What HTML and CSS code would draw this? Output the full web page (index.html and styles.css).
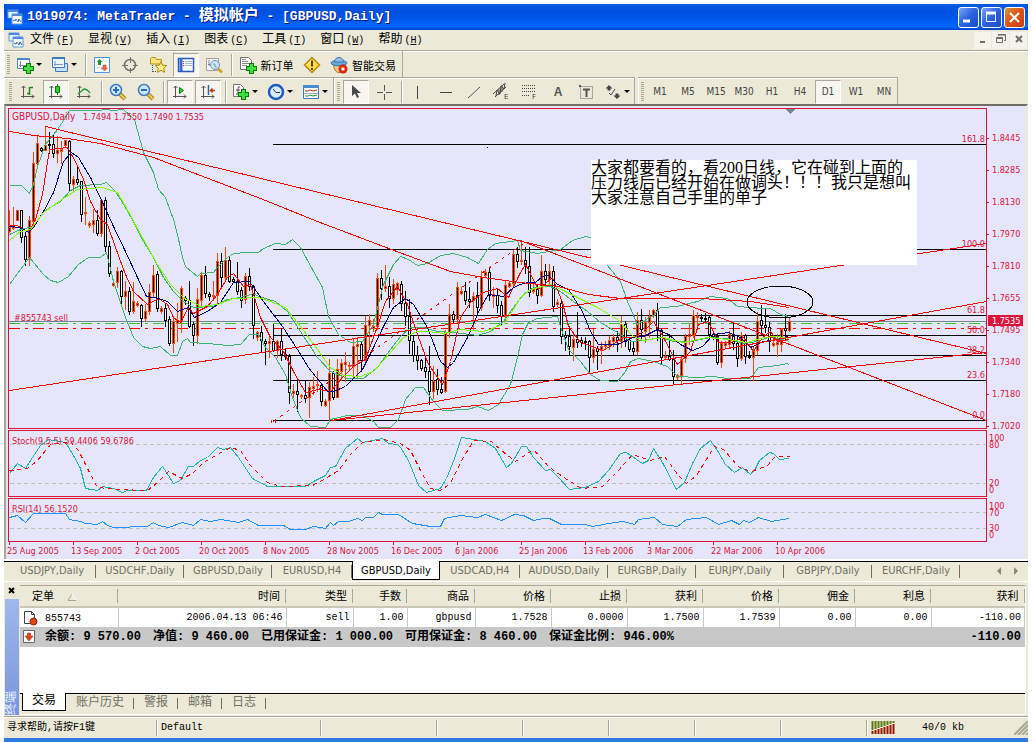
FILE: index.html
```html
<!DOCTYPE html>
<html lang="zh-CN">
<head>
    <meta charset="UTF-8">
    <meta name="viewport" content="width=device-width, initial-scale=1.0">
    <title>1019074: MetaTrader - 模拟帐户 - [GBPUSD,Daily]</title>
    <link rel="stylesheet" href="styles.css">
</head>
<body>
    <header class="titlebar">
        <svg class="app-icon" width="16" height="16" viewBox="0 0 16 16"><path d="M1 1h10v8H1z" fill="#e8f4ff" stroke="#5a9ae0"/><path d="M5 5h10v10H5z" fill="#fff" stroke="#5a9ae0"/><path d="M1 2h10M5 6h10" stroke="#4a8ae0" stroke-width="2"/><path d="M6 11l2 1 1-2 2 3 1-3 2 3" fill="none" stroke="#3a6ab0"/></svg>
        <h1>1019074: MetaTrader - <span class="cn">模拟帐户</span> - [GBPUSD,Daily]</h1>
        <div class="win-buttons">
            <button class="win" aria-label="Minimize"><svg width="18" height="18"><path d="M4 13h7" stroke="#fff" stroke-width="3"/></svg></button>
            <button class="win" aria-label="Maximize"><svg width="18" height="18"><path d="M4.500 5v8.500h9V5" fill="none" stroke="#fff"/><path d="M4 5h10" stroke="#fff" stroke-width="3"/></svg></button>
            <button class="win close" aria-label="Close"><svg width="18" height="18"><path d="M5 5l9 9M14 5l-9 9" stroke="#fff" stroke-width="2"/></svg></button>
        </div>
    </header>

    <nav class="menubar">
        <svg class="app-icon" width="16" height="16" viewBox="0 0 16 16"><path d="M1 1h10v8H1z" fill="#e8f4ff" stroke="#5a9ae0"/><path d="M5 5h10v10H5z" fill="#fff" stroke="#5a9ae0"/><path d="M1 2h10M5 6h10" stroke="#4a8ae0" stroke-width="2"/><path d="M6 11l2 1 1-2 2 3 1-3 2 3" fill="none" stroke="#3a6ab0"/></svg>
        <button>文件<span class="key">(<u>F</u>)</span></button>
        <button>显视<span class="key">(<u>V</u>)</span></button>
        <button>插入<span class="key">(<u>I</u>)</span></button>
        <button>图表<span class="key">(<u>C</u>)</span></button>
        <button>工具<span class="key">(<u>T</u>)</span></button>
        <button>窗口<span class="key">(<u>W</u>)</span></button>
        <button>帮助<span class="key">(<u>H</u>)</span></button>
        <div class="mdi-buttons">
            <button aria-label="Minimize chart"><svg width="12" height="12"><path d="M3 9h5" stroke="#716f64" stroke-width="2"/></svg></button>
            <button aria-label="Restore chart"><svg width="12" height="12" fill="none" stroke="#716f64"><path d="M3.500 3V1.500h7v6H9M1.500 4.500h6v5h-6zM1 5.500h7M3 2h8"/></svg></button>
            <button aria-label="Close chart"><svg width="12" height="12"><path d="M3 3l6 6M9 3L3 9" stroke="#716f64" stroke-width="2"/></svg></button>
        </div>
    </nav>

    <div class="toolrow">
        <div class="toolbar first">
            <span class="grip"></span>
            <button class="tool drop" aria-label="New chart"><svg width="18" height="18"><path d="M1.500 2.500h12v10h-12z" fill="#fff" stroke="#4a8ac8"/><path d="M1 3h13" stroke="#4a8ac8" stroke-width="2"/><path d="M4.500 5v6M3 9.500h8" stroke="#7a8a9a"/><path d="M12.500 7v11M7 12.500h11" stroke="#087a08" stroke-width="5"/><path d="M12.500 8v9M8 12.500h9" stroke="#3ce03c" stroke-width="3"/></svg></button>
            <button class="tool drop" aria-label="Profiles"><svg width="18" height="18"><path d="M4.500 7.500h12v8h-12z" fill="#c8e0f8" stroke="#3a7ac0"/><path d="M1.500 1.500h12v10h-12z" fill="#e8f4ff" stroke="#3a7ac0"/><path d="M1 2h13" stroke="#3a7ac0" stroke-width="2"/><path d="M4 5v5M3 8.500h9" stroke="#7a9aba"/></svg></button>
            <span class="sep"></span>
            <button class="tool" aria-label="Market watch"><svg width="18" height="18"><path d="M1.500 1.500h15v15h-15z" fill="#fff" stroke="#4a9ae0"/><path d="M4 12h10M9 5h5" stroke="#c8d8e8"/><path d="M6.500 3l3 3H8v3H5V6H3.500z" fill="#1a9a2a"/><path d="M11.500 15l-3-3H10V9h3v3h1.500z" fill="#e86a4a" stroke="#b83a1a" stroke-width=".5"/></svg></button>
            <button class="tool" aria-label="Data window"><svg width="18" height="18" fill="none" stroke="#707070"><circle cx="9" cy="9" r="5.500" stroke-width="1.500"/><path d="M9.500 1v6M9.500 12v5M1 9.500h6M12 9.500h5" stroke-width="1"/></svg></button>
            <button class="tool" aria-label="Navigator"><svg width="18" height="18"><path d="M1.500 8V2.500l1-1h4l1 2h5V8z" fill="#ffe27a" stroke="#b89418"/><path d="M3.500 9v7M4 15.500h4" stroke="#555" stroke-dasharray="1 1"/><path d="M12 5.500l1.700 3.700 4 .4-3 2.700.9 4-3.600-2-3.500 2 .8-4-3-2.700 4-.4z" fill="#fff08a" stroke="#b08a10"/></svg></button>
            <button class="tool on" aria-label="Terminal"><svg width="18" height="18"><path d="M1.500 2.500h15v13h-15z" fill="#fff" stroke="#2a5ac0" stroke-width="1.500"/><path d="M4 2v13" stroke="#3a6ad0" stroke-width="3"/><path d="M8 5.500h7M8 7.500h7M8 9.500h7" stroke="#aab4c8"/><path d="M6 5.500h1M6 7.500h1M6 9.500h1" stroke="#d03030"/></svg></button>
            <button class="tool" aria-label="Strategy tester"><svg width="18" height="18"><path d="M1.500 2.500h12v12h-12z" fill="#f8f8f8" stroke="#a0a0a0"/><path d="M4 4v6M3 8.500h3" stroke="#888"/><circle cx="10" cy="9" r="4.500" fill="#cfe6fa" stroke="#6a94c0"/><path d="M8 8h2v3h2" stroke="#7a9ab8" fill="none"/><path d="M13 12.500l4 4" stroke="#d8a030" stroke-width="3"/></svg></button>
            <span class="sep"></span>
            <button class="tool text order"><svg width="18" height="18"><path d="M1.500 1.500h8l3 3v9h-11z" fill="#fff" stroke="#707070"/><path d="M3 5.500h6M3 7.500h7M3 9.500h5M3 3.500h4" stroke="#888"/><path d="M12.500 7v11M7 12.500h11" stroke="#087a08" stroke-width="5"/><path d="M12.500 8v9M8 12.500h9" stroke="#3ce03c" stroke-width="3"/></svg>新订单</button>
            <button class="tool" aria-label="MetaEditor"><svg width="18" height="18"><path d="M9 1.500L16.500 9 9 16.500 1.500 9z" fill="#ffd94a" stroke="#b08a10" stroke-width="1.500"/><path d="M9 4.500v6M9 12v2" stroke="#5a4a08" stroke-width="2"/><path d="M4 9l4-4" stroke="#fff" stroke-opacity=".8"/></svg></button>
            <button class="tool text"><svg width="18" height="18"><path d="M3.500 8h11c0 5-2 8.500-5.500 8.500S4 13 3.500 8z" fill="#f0c878" stroke="#a8782a"/><ellipse cx="9" cy="7" rx="8" ry="2.800" fill="#6aa6dc" stroke="#3a76ac"/><path d="M4.500 6C4.500 0 13.500 0 13.500 6z" fill="#8cc0ea" stroke="#3a76ac"/><circle cx="13" cy="13" r="4.500" fill="#d8260c"/><path d="M11.500 11.500h3v3h-3z" fill="#fff"/></svg>智能交易</button>
        </div>
    </div>

    <div class="toolrow">
        <div class="toolbar charts">
            <span class="grip"></span>
            <button class="tool" aria-label="Bar chart"><svg width="18" height="18" fill="none" stroke="#555"><path d="M4.500 15V3M2.500 5l2-2 2 2M2 13.500h13M13 11.500l2 2-2 2"/><path d="M10.500 4v8M8 10.500h2M11 4.500h3" stroke="#1a8a1a" stroke-width="1.500"/></svg></button>
            <button class="tool on" aria-label="Candlesticks"><svg width="18" height="18" fill="none" stroke="#555"><path d="M4.500 15V3M2.500 5l2-2 2 2M2 13.500h13M13 11.500l2 2-2 2"/><path d="M10.500 1v11" stroke="#1a8a1a"/><path d="M8.500 3.500h4v6h-4z" fill="#30d030" stroke="#0a7a0a"/></svg></button>
            <button class="tool" aria-label="Line chart"><svg width="18" height="18" fill="none" stroke="#555"><path d="M4.500 15V3M2.500 5l2-2 2 2M2 13.500h13M13 11.500l2 2-2 2"/><path d="M3 11l6-5q3 0 6 4" stroke="#2a9a3a" stroke-width="1.500"/></svg></button>
            <span class="sep"></span>
            <button class="tool" aria-label="Zoom in"><svg width="18" height="18"><path d="M11 11l5 5" stroke="#a87a18" stroke-width="4"/><path d="M11 11l5 5" stroke="#f0cc58" stroke-width="2"/><circle cx="7" cy="7" r="5.500" fill="#d0e8ff" stroke="#3a7ac8" stroke-width="1.500"/><path d="M4 7h6M7 4v6" stroke="#2a6ac0" stroke-width="2"/></svg></button>
            <button class="tool" aria-label="Zoom out"><svg width="18" height="18"><path d="M11 11l5 5" stroke="#a87a18" stroke-width="4"/><path d="M11 11l5 5" stroke="#f0cc58" stroke-width="2"/><circle cx="7" cy="7" r="5.500" fill="#d0e8ff" stroke="#3a7ac8" stroke-width="1.500"/><path d="M4 7h6" stroke="#2a6ac0" stroke-width="2"/></svg></button>
            <span class="sep"></span>
            <button class="tool on" aria-label="Auto scroll"><svg width="18" height="18" fill="none" stroke="#555"><path d="M4.500 15V3M2.500 5l2-2 2 2M2 13.500h13M13 11.500l2 2-2 2"/><path d="M8.500 4.500v6l4-3z" fill="#30d030" stroke="#0a7a0a"/></svg></button>
            <button class="tool on" aria-label="Chart shift"><svg width="18" height="18" fill="none" stroke="#555"><path d="M4.500 15V3M2.500 5l2-2 2 2M2 13.500h13M13 11.500l2 2-2 2"/><path d="M9.500 2v10" stroke="#2a6aa0" stroke-width="1.500"/><path d="M16 7.500h-5M13.500 5.500l-2 2 2 2" stroke="#b83a10" stroke-width="1.500"/></svg></button>
            <span class="sep"></span>
            <button class="tool drop" aria-label="Indicators"><svg width="18" height="18"><path d="M1.500 1.500h7l3 3v9h-10z" fill="#fff" stroke="#777"/><path d="M8 4q-2-1-2 2v4q0 2-2 1M4 7h4" fill="none" stroke="#555"/><path d="M11.500 6v11M6 11.500h11" stroke="#087a08" stroke-width="5"/><path d="M11.500 7v9M7 11.500h9" stroke="#3ce03c" stroke-width="3"/></svg></button>
            <button class="tool drop" aria-label="Periods"><svg width="18" height="18"><circle cx="9" cy="9" r="7" fill="#d8ecff" stroke="#1c5cc0" stroke-width="2.500"/><path d="M6 6l3 3.500h4" fill="none" stroke="#334"/></svg></button>
            <button class="tool drop" aria-label="Templates"><svg width="18" height="18"><path d="M1.500 2.500h15v13h-15z" fill="#fff" stroke="#3a7ac0"/><path d="M1 3.500h16" stroke="#4a8ad0" stroke-width="3"/><path d="M3 8h3l2-1 3 1 4-1" fill="none" stroke="#b03010"/><path d="M2 10.500h14" stroke="#9ab"/><path d="M3 13h3l2-1 3 1 4-1" fill="none" stroke="#2a8a2a"/></svg></button>
        </div>
        <div class="toolbar lines">
            <span class="grip"></span>
            <button class="tool on" aria-label="Cursor"><svg width="18" height="18"><path d="M5 2v11l3-2.500L10 15l2-1-2-4h4z" fill="#4a4a4a"/></svg></button>
            <button class="tool" aria-label="Crosshair"><svg width="18" height="18"><path d="M9.500 2v6M9.500 11v6M2 9.500h6M11 9.500h6" stroke="#555"/></svg></button>
            <span class="sep"></span>
            <button class="tool" aria-label="Vertical line"><svg width="18" height="18"><path d="M8.500 3v13" stroke="#444"/></svg></button>
            <button class="tool" aria-label="Horizontal line"><svg width="18" height="18"><path d="M3 9.500h12" stroke="#444"/></svg></button>
            <button class="tool" aria-label="Trend line"><svg width="18" height="18"><path d="M3 15L15 4" stroke="#555"/></svg></button>
            <button class="tool" aria-label="Equidistant channel"><svg width="20" height="20"><path d="M1 12L12 2M3 15L14 5M4 14l1-6 3 4 1-8 3 3 1-6M7 13V7M10 10V3" fill="none" stroke="#444"/><text class="tag" x="12" y="17">E</text></svg></button>
            <button class="tool" aria-label="Fibonacci"><svg width="20" height="20"><path d="M2 3.500h13M2 6.500h13M2 9.500h13M2 13.500h8" stroke="#444" stroke-dasharray="1 1"/><text class="tag" x="12" y="17">F</text></svg></button>
            <button class="tool glyph" aria-label="Text">A</button>
            <button class="tool" aria-label="Text label"><svg width="18" height="18"><path d="M3.500 3.500h12v12h-12z" fill="none" stroke="#666" stroke-dasharray="1 1"/><path d="M2 2h2v2H2z" fill="#555"/><path d="M6 6.500h7M9.500 6v8" stroke="#555" stroke-width="2"/></svg></button>
            <button class="tool drop" aria-label="Arrows"><svg width="18" height="18"><path d="M5 2l3.500 3.500H6.500v2h-3v-2H1.500zM13 16l-3.500-3.500h2v-2h3v2h2z" fill="#444"/><path d="M5 10l2 2 4-6" fill="none" stroke="#444"/></svg></button>
        </div>
        <div class="toolbar periods">
            <span class="grip"></span>
            <button class="tool period">M1</button>
            <button class="tool period">M5</button>
            <button class="tool period">M15</button>
            <button class="tool period">M30</button>
            <button class="tool period">H1</button>
            <button class="tool period">H4</button>
            <button class="tool period on">D1</button>
            <button class="tool period">W1</button>
            <button class="tool period">MN</button>
        </div>
    </div>

    <main class="chart-frame">
        <svg id="chart" class="chart" viewBox="6 106 1020 453" role="img" aria-label="GBPUSD Daily"></svg>
    </main>

    <div class="chart-tabs">
        <button>USDJPY,Daily</button>
        <button>USDCHF,Daily</button>
        <button>GBPUSD,Daily</button>
        <button class="short">EURUSD,H4</button>
        <button class="active">GBPUSD,Daily</button>
        <button class="short">USDCAD,H4</button>
        <button>AUDUSD,Daily</button>
        <button>EURGBP,Daily</button>
        <button>EURJPY,Daily</button>
        <button>GBPJPY,Daily</button>
        <button>EURCHF,Daily</button>
        <div class="tab-scroll"><svg width="24" height="8"><path d="M5 0v8L1 4zM18 0v8l4-4z" fill="#8a887a"/></svg></div>
    </div>

    <section class="terminal">
        <div class="side">
            <button aria-label="Close terminal"><svg width="8" height="8"><path d="M1 1l5 5M6 1L1 6" stroke="#000" stroke-width="2"/></svg></button>
            <div class="side-label"><span>终端</span></div>
        </div>
        <div class="pane">
            <table>
                <colgroup>
                    <col class="c-order"><col class="c-time"><col class="c-type"><col class="c-lots"><col class="c-symbol">
                    <col class="c-num"><col class="c-num"><col class="c-num"><col class="c-num"><col class="c-num"><col class="c-num"><col>
                </colgroup>
                <thead>
                    <tr><th class="left">定单<svg class="sort" width="10" height="8"><path d="M1 7.500h8M1 7.500L5 1" fill="none" stroke="#aca899"/><path d="M5 1l4 6" stroke="#fff"/></svg></th><th>时间</th><th>类型</th><th>手数</th><th>商品</th><th>价格</th><th>止损</th><th>获利</th><th>价格</th><th>佣金</th><th>利息</th><th>获利</th></tr>
                </thead>
                <tbody>
                    <tr>
                        <td class="left"><svg class="row-icon" width="15" height="16"><path d="M1.500 1.500h7l3 3v9h-10z" fill="#fff" stroke="#444"/><path d="M8.500 1.500v3h3" fill="none" stroke="#444"/><circle cx="10.500" cy="11.500" r="3.500" fill="#e04818" stroke="#8a2008"/></svg>855743</td>
                        <td>2006.04.13 06:46</td><td>sell</td><td>1.00</td><td>gbpusd</td><td>1.7528</td><td>0.0000</td><td>1.7500</td><td>1.7539</td><td>0.00</td><td>0.00</td><td>-110.00</td>
                    </tr>
                    <tr class="summary">
                        <td colspan="12">
                            <div class="totals">
                                <svg width="13" height="14"><path d="M.500.500h11v12H.500z" fill="#fff" stroke="#666"/><path d="M4.500 3v3H2l4 5 4-5H7.500V3z" fill="#e04818" stroke="#8a2008" stroke-width=".5"/></svg>
                                <span>余额: 9 570.00</span>
                                <span>净值: 9 460.00</span>
                                <span>已用保证金: 1 000.00</span>
                                <span>可用保证金: 8 460.00</span>
                                <span>保证金比例: 946.00%</span>
                                <span class="profit">-110.00</span>
                            </div>
                        </td>
                    </tr>
                </tbody>
            </table>
            <div class="pane-tabs">
                <button class="active">交易</button>
                <button>账户历史</button>
                <button>警报</button>
                <button>邮箱</button>
                <button>日志</button>
            </div>
        </div>
    </section>

    <footer class="statusbar">
        <div class="help">寻求帮助,请按F1键</div>
        <div class="profile">Default</div>
        <div class="blank wide"></div>
        <div class="blank"></div>
        <div class="blank"></div>
        <div class="blank"></div>
        <div class="blank"></div>
        <div class="blank"></div>
        <div class="traffic">
            <svg width="24" height="13"><path d="M1.500 0v9M4.500 0v8M7.500 0v7M10.500 0v6M13.500 0v5M16.500 0v4M19.500 0v3M22.500 0v2" stroke="#5a7a10" stroke-width="2"/><path d="M1.500 10v3M4.500 9v4M7.500 8v5M10.500 7v6M13.500 6v7M16.500 5v8M19.500 4v9M22.500 3v10" stroke="#981800" stroke-width="2"/></svg>
            <span>40/0 kb</span>
            <svg class="resize" width="14" height="14"><path d="M0 14L14 0M4 14L14 4M8 14l6-6M12 14l2-2" stroke="#aca899" stroke-width="2"/></svg>
        </div>
    </footer>

    <script src="chart.js"></script>
</body>
</html>
```
FILE: styles.css
```css
* {
    box-sizing: border-box;
}

body {
    margin: 0;
    padding: 4px 4px 0;
    min-height: 100vh;
    display: flex;
    flex-direction: column;
    background: #fff;
    color: #000;
    font-family: "Liberation Mono", "Noto Sans CJK SC", monospace;
    font-size: 10px;
}

button {
    margin: 0;
    padding: 0;
    border: 0;
    background: none;
    color: inherit;
    font: inherit;
}

svg {
    flex-shrink: 0;
}

/* title bar and menu */
.titlebar {
    height: 26px;
    display: flex;
    align-items: center;
    padding: 0 3px;
    background: linear-gradient(#0a5ae0, #0050e0 30%, #0058ee 60%, #0068ff 85%, #0040c8);
    color: #fff;
}

.titlebar h1 {
    flex: 1;
    margin: 0 0 0 4px;
    font-size: 13px;
    font-weight: bold;
    line-height: 20px;
    white-space: pre;
    text-shadow: 1px 1px #0a1883;
}

.titlebar .cn {
    font-size: 15px;
}

.win-buttons {
    display: flex;
    gap: 2px;
}

.win {
    width: 21px;
    height: 21px;
    border: 1px solid #fff;
    border-radius: 3px;
    background: linear-gradient(135deg, #7aa4f8, #2a62e0 50%, #1c4cc8);
}

.win svg {
    display: block;
}

.win.close {
    background: linear-gradient(135deg, #c8a030, #e05a20 40%, #c83c10);
}

.menubar {
    height: 20px;
    display: flex;
    align-items: center;
    padding-left: 4px;
    background: #ece9d8;
}

.menubar .app-icon {
    margin-right: -2px;
}

.menubar > button {
    height: 18px;
    padding: 0 6px 0 8px;
    font-size: 12px;
    line-height: 18px;
    white-space: nowrap;
}

.key {
    margin-left: 2px;
    font-size: 10px;
}

.mdi-buttons {
    display: flex;
    gap: 1px;
    margin-left: auto;
    padding-right: 1px;
}

.mdi-buttons button {
    width: 17px;
    height: 17px;
    background: #f5f4ec;
}

/* toolbars */
.toolrow {
    height: 27px;
    display: flex;
    background: #ece9d8;
}

.toolrow:has(.first) {
    border-top: 1px solid #aca899;
    box-shadow: inset 0 1px #fff;
}

.toolbar {
    display: flex;
    align-items: center;
    gap: 2px;
    padding: 1px 0 0 3px;
    border-top: 1px solid #aca899;
    border-right: 1px solid #aca899;
    box-shadow: inset 1px 1px #fff;
}

.toolbar.first {
    padding-right: 3px;
    border-top: 0;
}

.toolbar.charts {
    padding-left: 5px;
    padding-right: 1px;
}

.grip {
    width: 3px;
    height: 20px;
    margin-right: 1px;
    background: repeating-linear-gradient(#aca899 0 1px, #ece9d8 1px 2px);
}

.sep {
    width: 2px;
    height: 22px;
    margin-left: 2px;
    border-left: 1px solid #aca899;
    border-right: 1px solid #fff;
}

.tool {
    width: 26px;
    height: 24px;
    display: flex;
    align-items: center;
    justify-content: center;
}

.tool.on {
    border: 1px solid;
    border-color: #aca899 #fff #fff #aca899;
    background: #f6f5ef;
}

.tool.drop {
    width: 33px;
    justify-content: flex-start;
    padding-left: 3px;
}

.tool.drop::after {
    content: "";
    margin-left: 2px;
    border: 3px solid transparent;
    border-top-color: #000;
    border-bottom: 0;
}

.tool.text {
    width: auto;
    gap: 4px;
    padding: 0 3px;
    font-size: 11px;
    white-space: nowrap;
}

.tool.order {
    width: 62px;
}

.tool.glyph {
    color: #555;
    font: bold 12px "Liberation Sans", sans-serif;
}

.tool.period {
    color: #444;
    font: 10px "DejaVu Sans Condensed", "DejaVu Sans", sans-serif;
}

.periods {
    margin-left: 3px;
}

.tag {
    font: 7px "DejaVu Sans", sans-serif;
    fill: #444;
}

/* chart window */
.chart-frame {
    border: 2px solid #716f64;
    border-color: #716f64 #ece9d8 #716f64 #aca899;
    border-bottom: 0;
    background: #e6e6fa;
}

.chart {
    display: block;
    width: 100%;
    height: auto;
}

.chart text {
    font: 9px "DejaVu Sans Condensed", "DejaVu Sans", sans-serif;
    fill: #dc143c;
}

.chart .symbol {
    font-size: 10px;
}

.chart .end {
    text-anchor: end;
}

.chart .price-now {
    fill: #fff;
}

.chart .note {
    font: 16px "Liberation Serif", "Noto Sans CJK SC", serif;
    fill: #000;
}

.chart-tabs {
    height: 23px;
    display: flex;
    align-items: flex-start;
    padding: 0 8px 0 4px;
    border-top: 2px solid #fff;
    border-bottom: 1px solid #fff;
    background: #ece9d8;
    box-shadow: inset 0 1px #000;
}

.chart-tabs button {
    width: 88px;
    height: 19px;
    color: #716f64;
    font: 11px/17px "DejaVu Sans Condensed", "DejaVu Sans", sans-serif;
    background: linear-gradient(#716f64, #716f64) right 4px / 1px 13px no-repeat;
}

.chart-tabs .short {
    width: 80px;
}

.chart-tabs .active {
    border: 1px solid #000;
    border-top: 0;
    background: #fff;
    color: #000;
}

.tab-scroll {
    margin: 6px 0 0 auto;
}

/* terminal */
.terminal {
    flex: 1;
    display: flex;
    padding: 3px 2px 1px 1px;
    background: #ece9d8;
}

.side {
    width: 14px;
    display: flex;
    flex-direction: column;
}

.side button {
    height: 14px;
}

.side-label {
    flex: 1;
    display: flex;
    align-items: flex-end;
    background: linear-gradient(#a0b8ec, #7a94dc);
    color: #e8f0ff;
    font-size: 12px;
    line-height: 14px;
}

.side-label span {
    writing-mode: vertical-rl;
    text-orientation: sideways;
    transform: rotate(180deg);
}

.pane {
    flex: 1;
    display: flex;
    flex-direction: column;
    margin-left: 1px;
    border-top: 1px solid #aca899;
    border-bottom: 1px solid #fff;
    border-right: 1px solid #fff;
    background: #fff;
}

table {
    width: 100%;
    table-layout: fixed;
    border-collapse: collapse;
}

.c-order {
    width: 98px;
}

.c-time {
    width: 168px;
}

.c-type {
    width: 67px;
}

.c-lots {
    width: 54px;
}

.c-symbol {
    width: 68px;
}

.c-num {
    width: 76px;
}

th {
    height: 21px;
    padding: 1px 6px 0 0;
    background: linear-gradient(#aca899, #aca899) right 3px / 1px 14px no-repeat, #ece9d8;
    border-bottom: 2px solid #cbc7b8;
    font-size: 11px;
    font-weight: normal;
    line-height: 14px;
    text-align: right;
}

th.left {
    padding-left: 12px;
    text-align: left;
}

.sort {
    margin-left: 13px;
    vertical-align: -1px;
}

td {
    height: 20px;
    padding: 0 3px 0 0;
    border-right: 1px solid #c8c8c8;
    line-height: 14px;
    text-align: right;
    white-space: nowrap;
}

td.left {
    padding-left: 3px;
    text-align: left;
}

.row-icon {
    margin-right: 7px;
    vertical-align: middle;
}

.summary td {
    padding-left: 3px;
    background: #c8c8c8;
    font-size: 12px;
    font-weight: bold;
}

.totals {
    display: flex;
    align-items: center;
    gap: 12px;
}

.totals svg {
    margin-right: -3px;
}

.profit {
    margin-left: auto;
}

.pane-tabs {
    height: 21px;
    display: flex;
    align-items: flex-start;
    margin-top: auto;
    padding-left: 2px;
    border-top: 1px solid #000;
    background: #ece9d8;
}

.pane-tabs button {
    height: 18px;
    padding: 0 10px;
    color: #716f64;
    font-size: 12px;
    line-height: 17px;
    background: linear-gradient(#716f64, #716f64) right 4px / 1px 11px no-repeat;
}

.pane-tabs .active {
    margin-top: -1px;
    padding: 0 9px;
    border: 1px solid #000;
    border-top: 0;
    background: #fff;
    color: #000;
}

/* status bar */
.statusbar {
    height: 26px;
    display: flex;
    align-items: center;
    border-top: 1px solid #aca899;
    border-bottom: 4px solid #2f7be4;
    background: #ece9d8;
    box-shadow: inset 0 1px #fff;
    white-space: nowrap;
}

.statusbar > div {
    height: 16px;
    padding-left: 4px;
    border-left: 1px solid #aca899;
    box-shadow: inset 1px 0 #fff;
    line-height: 16px;
}

.statusbar .help {
    width: 152px;
    border: 0;
    box-shadow: none;
    padding-left: 3px;
}

.profile {
    width: 164px;
}

.blank {
    width: 86px;
}

.blank.wide {
    width: 116px;
}

.statusbar .traffic {
    flex: 1;
    display: flex;
    align-items: center;
    gap: 27px;
}

.resize {
    margin-left: auto;
}
```
FILE: chart.js
```js
const chart = document.getElementById('chart');
const RED = '#dc143c';
const FIRST_BAR = 9;
const BAR_STEP = 4;

// direction, high, low, body top, body bottom
const bars = `
U210 232 227 231,U207 229 225 228,U210 220 210 220,D210 242 210 237,D232 265 236 259,U216 265 220 258,U152 227 163 221,U136 167 143 163
D147 151 148 150,U126 150 145 150,D132 153 144 145,D134 157 144 153,U136 162 150 153,U141 163 149 151,U140 146 140 145,D140 190 141 183
U176 191 179 184,D166 184 179 182,D181 221 181 214,U197 224 212 213,U221 227 223 225,U209 232 220 224,D210 235 220 233,U199 236 200 233
D197 251 200 246,D241 276 246 273,U281 286 283 285,U267 287 271 282,D270 304 271 296,U281 309 291 296,D287 314 291 311,U282 313 301 311
U301 306 303 305,D304 326 305 318,U304 321 311 318,U284 314 292 311,U265 297 275 292,D271 311 274 308,U306 313 308 311,D304 326 308 320
D316 345 319 343,U317 352 321 343,U303 341 320 323,U286 332 288 321,D296 304 298 300,D281 327 300 326,D322 345 324 335,U288 343 299 335
U272 306 275 300,D266 297 275 293,D292 300 294 296,U281 300 295 296,U253 303 261 295,D253 286 261 277,U247 281 260 277,D256 282 260 281
D277 282 279 281,D262 294 281 291,D287 307 290 300,U273 303 276 299,D268 290 276 286,D285 338 286 325,U331 340 332 337,D326 352 332 340
D339 364 341 343,U334 357 341 343,D324 351 341 350,U340 357 341 350,D328 360 341 354,D349 359 354 356,D354 403 356 392,U384 397 391 393
D381 411 391 394,U394 398 395 396,D380 402 395 398,U382 417 387 397,U377 394 386 388,U371 391 384 385,D383 405 385 401,U399 406 401 405
U359 420 373 400,D371 399 373 397,U359 397 369 397,U359 380 363 371,U352 381 362 364,U362 370 365 366,U339 377 346 366,U337 377 344 346
D341 371 344 360,U316 362 325 359,U314 347 320 325,U319 331 326 328,U273 329 278 326,D270 299 278 288,U265 291 286 288,D277 307 286 298
U279 303 284 298,U282 294 283 289,D281 310 284 303,D291 325 303 316,D299 353 316 340,D336 361 341 355,D346 369 355 360,D359 370 360 368
D356 377 367 371,D346 404 371 391,U366 398 381 391,D369 394 379 389,D377 393 389 392,U330 392 332 391,U304 337 314 332,D311 322 314 319
U282 323 287 319,U287 294 291 293,D282 304 291 300,D287 307 299 301,U292 329 296 300,D282 314 295 307,U271 310 277 307,U269 276 272 275
D268 300 272 295,U287 307 294 296,D289 312 295 305,D301 324 305 316,U281 321 285 315,U281 287 283 286,U250 286 254 283,D247 267 254 261
U241 264 260 261,D247 273 260 266,D247 296 266 292,U284 293 289 291,D284 303 289 295,U255 296 271 295,D264 284 271 279,U264 283 271 279
D266 311 271 306,U299 306 302 304,D301 343 303 336,D331 350 335 337,D326 355 336 346,U332 360 339 347,D312 347 339 342,D337 346 340 342
D337 349 341 342,D340 372 341 357,U329 362 349 357,D346 369 348 351,U342 363 346 350,U341 349 344 346,U336 349 340 345,U334 346 337 341
D331 351 337 340,U316 347 324 341,D321 346 324 341,D337 351 340 349,D341 354 348 351,U312 354 320 351,D309 339 320 329,U317 342 322 331
U310 337 316 322,U309 317 310 315,D303 340 310 330,D328 363 330 357,U351 359 356 357,D334 360 356 359,D350 384 359 376,U374 379 375 377
U357 383 359 375,U334 362 336 358,U323 344 334 336,U310 337 315 335,U312 327 316 317,D314 321 317 318,D313 321 318 319,D316 336 317 334
D332 339 334 336,D334 364 336 362,U341 367 343 362,U341 347 343 345,U331 347 334 344,D322 349 336 343,D337 366 343 358,U332 360 335 358
D334 363 335 356,D351 358 356 357,U346 380 351 357,U312 354 321 350,D305 334 320 325,D309 332 325 327,D322 351 327 341,U337 346 343 345
U334 356 342 344,U328 351 329 344,D314 339 328 330,U318 331 321 330`.trim().split(/[,\n]/);

const curves = [
    // Bollinger bands
    ['#3cb371', '9,185 21,185 29,193 33,184 37,166 45,144 57,129 65,117 69,110 97,110 106,109 113,110 123,109 134,119 143,152 153,172 158,189 165,197 173,219 177,234 182,257 185,266 192,272 197,276 200,273 213,272 217,267 227,257 233,253 247,252 258,252 263,248 275,243 285,244 292,239 300,247 312,269 322,287 328,316 338,334 350,342 362,341 373,324 383,284 393,264 400,256 408,259 417,265 427,263 440,255 453,253 467,257 478,263 487,249 495,243 510,241 517,240 520,250 537,253 560,249 572,240 585,236 595,238 607,265 620,281 627,301 637,324 653,315 660,307 677,306 697,301 710,296 727,298 737,306 763,308 770,308 780,314 788,316'],
    ['#3cb371', '9,284 20,269 29,257 43,274 50,280 58,282 68,276 78,264 88,257 100,257 106,252 113,281 125,317 133,337 142,346 150,348 160,346 170,355 177,355 182,341 187,338 190,342 207,343 227,345 240,344 249,334 258,334 265,347 275,357 285,374 292,397 300,417 310,426 325,427 330,419 347,415 362,415 373,421 378,427 390,427 398,419 405,399 415,387 423,387 433,401 442,410 467,409 477,406 488,410 498,404 510,384 517,357 522,334 528,322 537,318 557,316 560,326 568,349 580,361 590,374 600,380 617,381 625,371 630,361 638,358 653,361 667,366 677,376 697,377 713,376 727,378 750,378 758,367 777,365 787,363 789,365'],
    ['#3cb371', '9,234 20,229 33,226 43,211 60,201 70,190 80,185 100,184 106,182 115,191 125,207 133,221 143,241 153,257 163,277 173,291 183,301 193,307 213,306 227,299 240,297 253,293 258,296 275,301 287,311 300,331 317,357 330,371 347,378 363,378 377,367 390,349 400,336 410,327 423,327 437,331 453,332 477,335 490,331 503,321 513,307 523,294 533,287 550,286 560,291 573,301 587,311 600,322 617,332 630,341 643,340 660,337 673,341 690,341 710,337 727,338 743,343 757,341 770,336 789,341'],
    // moving averages
    ['#ff0000', '9,225 17,225 28,232 35,219 42,194 49,149 67,147 75,161 83,179 90,201 100,219 107,224 115,247 125,274 133,291 147,304 158,298 167,304 173,317 180,322 188,307 193,313 207,306 217,294 227,277 233,273 243,286 250,284 260,317 270,337 283,351 293,371 305,392 318,389 330,391 342,377 353,366 365,359 377,326 385,301 397,286 407,304 417,334 428,364 442,384 450,361 460,317 470,302 483,292 497,288 508,297 519,274 525,264 538,289 552,277 562,302 568,326 580,342 603,350 623,337 633,337 643,331 653,321 663,337 677,364 690,351 698,324 708,321 718,342 730,342 743,337 753,351 762,337 770,331 777,341 789,339'],
    ['#000080', '9,226 20,227 28,232 33,227 43,211 53,192 63,161 71,152 78,157 90,177 103,204 113,226 125,251 137,277 146,296 158,298 167,301 177,311 188,307 194,317 207,311 220,302 233,282 249,281 263,301 282,326 297,349 308,367 327,391 333,391 345,386 362,369 373,347 383,326 393,307 405,298 413,304 427,327 440,361 447,367 453,362 467,337 480,307 488,294 503,296 513,287 520,284 527,282 535,282 542,276 548,275 557,284 568,289 582,311 590,331 598,344 617,344 633,337 643,336 657,329 668,334 680,344 692,350 702,346 713,334 728,332 740,337 750,347 763,341 777,339 789,335'],
    ['#7fff00', '9,240 20,231 30,229 43,212 60,200 77,189 90,188 102,187 117,192 128,211 143,239 157,264 170,284 183,297 200,306 217,304 233,298 258,297 270,301 285,307 300,326 317,349 330,367 343,375 360,376 373,371 390,352 403,337 417,331 427,331 443,333 460,329 483,331 503,324 513,309 520,297 530,289 550,284 563,290 577,297 597,307 617,319 633,336 643,340 663,337 683,342 707,337 727,339 747,342 763,337 777,336 789,338'],
    ['#ff0000', '9,131 33,135 67,138 100,143 123,149 153,157 260,198 270,202 317,221 383,246 450,271 483,277 520,282 558,286 588,294 620,298 700,298 750,301 789,307'],
    // trend lines
    ['#ff0000', '45,126 986,353'],
    ['#ff0000', '520,240 986,420'],
    ['#ff0000', '9,390 986,243'],
    ['#ff0000', '331,420 986,301'],
    ['#ff0000', '331,420 986,352'],
    ['#ff0000', '273,421 523,243', '3 5'],
    // stochastic and RSI
    ['#20b2aa', '9,473 17,463 25,468 32,457 40,445 48,439 65,442 73,455 80,468 85,488 97,490 102,486 113,488 122,492 127,490 146,490 153,477 162,466 168,475 173,483 180,480 188,466 193,466 200,460 207,457 217,447 223,449 230,447 238,457 252,478 267,486 305,486 315,480 325,475 330,467 335,466 345,448 357,438 362,442 382,438 388,443 397,444 400,447 408,460 418,485 426,492 440,488 446,478 454,458 461,437 467,438 485,441 495,448 506,467 511,463 521,446 526,446 533,457 545,470 550,469 557,476 569,489 585,487 598,481 608,470 620,453 626,452 636,459 642,463 648,460 653,448 662,462 676,489 684,482 692,463 700,448 710,440 717,450 725,464 734,472 742,467 750,474 755,468 759,460 769,452 773,453 779,459 789,458'],
    ['#ff0000', '9,470 27,468 37,460 50,444 70,441 78,450 87,468 97,487 117,489 147,490 157,482 168,471 182,478 192,473 203,462 217,454 230,447 240,450 250,465 267,482 280,486 312,485 325,478 338,470 350,454 362,442 383,439 400,443 410,450 420,470 430,488 440,490 450,483 460,462 473,440 491,441 501,450 515,461 533,449 549,467 565,478 581,488 602,486 618,470 632,454 650,460 664,456 678,475 686,483 696,475 714,446 723,449 739,467 751,471 767,465 775,456 789,456', '4 4'],
    ['#1e90ff', '9,517 17,515 25,522 33,513 65,513 69,519 80,521 85,523 97,524 102,521 107,525 113,527 147,526 153,522 158,525 168,527 182,522 193,525 200,519 210,521 220,519 238,522 247,519 258,525 283,525 290,529 305,529 313,526 325,528 330,522 333,525 338,521 348,521 357,518 362,520 365,517 373,517 378,512 382,514 398,514 412,523 430,526 440,526 444,518 460,515 477,517 485,514 501,520 514,514 523,515 533,520 543,518 549,518 561,524 585,524 592,526 614,522 623,521 634,524 638,519 654,517 662,524 677,526 686,519 706,517 718,524 731,520 739,524 743,520 749,522 758,517 771,521 789,518']
];

const prices = ['1.8445', '1.8285', '1.8130', '1.7970', '1.7810', '1.7655', '1.7495', '1.7340', '1.7180', '1.7020'];
const dates = ['25 Aug 2005', '13 Sep 2005', '2 Oct 2005', '20 Oct 2005', '8 Nov 2005', '28 Nov 2005', '16 Dec 2005',
    '6 Jan 2006', '25 Jan 2006', '13 Feb 2006', '3 Mar 2006', '22 Mar 2006', '10 Apr 2006'];
const fibs = [['161.8', 144], ['100.0', 249], ['61.8', 315], ['50.0', 335], ['38.2', 355], ['23.6', 380], ['0.0', 420]];

function rect(x, y, w, h, fill) {
    return `<rect x="${x}" y="${y}" width="${w}" height="${h}" fill="${fill}"/>`;
}

function hline(x1, x2, y, color, dash) {
    return `<path d="M${x1} ${y + 0.5}H${x2}" stroke="${color}" stroke-dasharray="${dash || 'none'}"/>`;
}

function label(x, y, text, cls) {
    return `<text x="${x}" y="${y}" class="${cls || ''}">${text}</text>`;
}

function drawBar(bar, i) {
    const up = bar[0] === 'U';
    const [high, low, top, bottom] = bar.slice(1).split(' ').map(Number);
    const x = FIRST_BAR + i * BAR_STEP;
    const color = up ? '#ff4500' : '#000';
    let out = rect(x, high, 1, low - high + 1, color) + rect(x - 1, top, 3, bottom - top + 1, color);
    if (bottom - top > 1) {
        out += rect(x, top + 1, 1, bottom - top - 1, up ? '#000' : '#fff');
    }
    return out;
}

function draw() {
    let out = '<g shape-rendering="crispEdges" fill="none">';

    fibs.forEach(f => out += hline(273, 986, f[1], '#000'));
    out += hline(9, 986, 321, '#778899');
    out += hline(9, 986, 323, '#32cd32', '11 5 3 5');
    out += hline(9, 986, 328, '#ff0000', '11 5 3 5');
    [444, 483, 512, 528].forEach(y => out += hline(10, 986, y, '#c0c0c0', '4 3'));

    out += bars.map(drawBar).join('');
    curves.forEach(([color, points, dash]) => {
        out += `<polyline points="${points}" transform="translate(.5 .5)" stroke="${color}" stroke-dasharray="${dash || 'none'}"/>`;
    });

    // window frames
    [[108, 428], [430, 496], [498, 541]].forEach(([a, b]) => {
        out += `<path d="M8.500 ${a + 0.5}H986.500V${b + 0.5}H8.500z" stroke="${RED}"/>`;
    });
    prices.forEach((p, i) => out += hline(987, 989, 138 + i * 32, RED));
    dates.forEach((d, i) => out += rect(9 + i * 64, 542, 1, 3, RED));
    out += rect(487, 147, 1, 1, '#000');
    out += rect(271, 420, 1, 3, '#f00') + rect(275, 420, 1, 3, '#f00');
    out += '<path d="M785 109h10l-5 5z" fill="#778899"/>';
    out += '<ellipse cx="780" cy="302" rx="33" ry="16" stroke="#000"/>';
    out += rect(591, 160, 326, 105, '#fff');
    out += rect(988, 315, 35, 11, RED);
    out += '</g>';

    prices.forEach((p, i) => out += label(992, 141 + i * 32, p));
    fibs.forEach(f => out += label(985, f[1] - 2, f[0], 'end'));
    dates.forEach((d, i) => out += label(7 + i * 64, 554, d));
    out += label(992, 324, '1.7535', 'price-now');
    out += label(12, 120, 'GBPUSD,Daily', 'symbol') + label(83, 120, '1.7494 1.7550 1.7490 1.7535');
    out += label(14, 321, '#855743 sell');
    out += label(12, 444, 'Stoch(9,5,5) 59.4406 59.6786');
    out += label(12, 512, 'RSI(14) 56.1520');
    [['100', 441], ['80', 448], ['20', 486], ['0', 493], ['100', 509], ['70', 516], ['30', 531], ['0', 538]]
        .forEach(([t, y]) => out += label(989, y, t));

    out += label(591, 173, '大家都要看的，看200日线，它在碰到上面的', 'note');
    out += label(591, 188, '压力线后已经开始在做调头！！！我只是想叫', 'note');
    out += label(591, 203, '大家注意自己手里的单子', 'note');

    chart.innerHTML = out;
}

draw();
```
